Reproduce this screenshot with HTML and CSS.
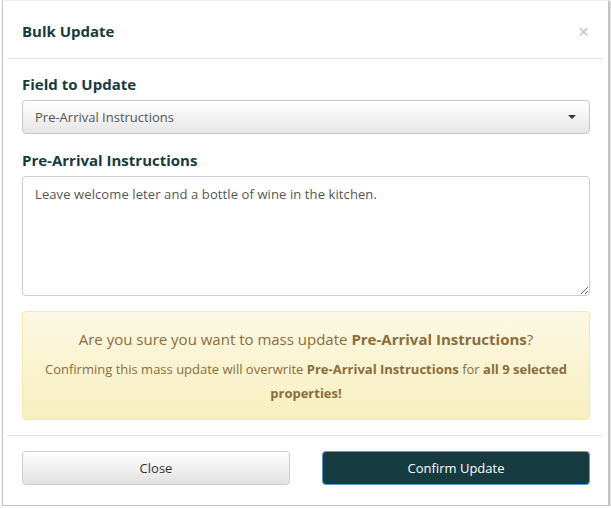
FILE: index.html
```html
<!DOCTYPE html>
<html lang="en">
  <head>
    <meta charset="UTF-8" />
    <meta name="viewport" content="width=device-width, initial-scale=1.0" />
    <title>Bulk Update</title>
    <link rel="stylesheet" href="styles.css">
  </head>

  <body>
    <div class="modal">
      <div class="modal-header">
        <h4 class="modal-title">Bulk Update</h4>
        <button class="close" aria-label="Close">&times;</button>
      </div>

      <div class="modal-body">
        <label class="field-label" for="field">Field to Update</label>
        <div class="select">
          <span>Pre-Arrival Instructions</span>
          <span class="caret"></span>
        </div>

        <label class="field-label second" for="instructions">Pre-Arrival Instructions</label>
        <textarea id="instructions" class="textarea">Leave welcome leter and a bottle of wine in the kitchen.</textarea>

        <div class="alert">
          <p class="alert-question">Are you sure you want to mass update <b>Pre-Arrival Instructions</b>?</p>
          <p class="alert-note">Confirming this mass update will overwrite <b>Pre-Arrival Instructions</b> for <b>all 9 selected properties!</b></p>
        </div>
      </div>

      <div class="modal-footer">
        <button class="btn btn-default">Close</button>
        <button class="btn btn-primary">Confirm Update</button>
      </div>
    </div>
  </body>
</html>
```

FILE: styles.css
```css
body {
  margin: 0;
  background-color: white;
  font-family: "Open Sans", "Liberation Sans", sans-serif;
  color: #555;
}

.modal {
  box-sizing: border-box;
  width: 607px;
  height: 506px;
  margin: 0 0 0 2px;
  padding: 0 18px 0 19px;
  border: 1px solid #c4c4c4;
  border-top-color: #eee;
  box-shadow: 1px 1px 2px rgba(0, 0, 0, 0.35);
  background-color: white;
}

.modal-header {
  display: flex;
  justify-content: space-between;
  align-items: center;
  margin: 0 -13px 0 -15px;
  padding: 20px 13px 16px 15px;
  border-bottom: 1px solid #e3e3e3;
}

.modal-title {
  margin: 0;
  font-size: 15px;
  line-height: 21px;
  font-weight: bold;
  color: #173b40;
}

.close {
  padding: 0;
  border: none;
  background: none;
  font-size: 19px;
  line-height: 21px;
  color: #c4c4c4;
  margin-right: 1px;
}

.modal-body {
  padding: 15px 0;
}

.field-label {
  display: block;
  margin-bottom: 5px;
  font-size: 15px;
  line-height: 21px;
  font-weight: bold;
  color: #173b40;
}

.field-label.second {
  margin-top: 16px;
}

.select {
  box-sizing: border-box;
  display: flex;
  justify-content: space-between;
  align-items: center;
  height: 34px;
  padding: 0 12px;
  border: 1px solid #c8c8c8;
  border-radius: 4px;
  background-image: linear-gradient(to bottom, #fff 0, #e6e6e6 100%);
  font-size: 13px;
}

.caret {
  width: 0;
  height: 0;
  margin-right: 1px;
  border-top: 4px solid #333;
  border-left: 4px solid transparent;
  border-right: 4px solid transparent;
}

.textarea {
  box-sizing: border-box;
  display: block;
  width: 100%;
  height: 120px;
  margin: 0;
  padding: 8px 12px;
  border: 1px solid #ccc;
  border-radius: 4px;
  font-family: inherit;
  font-size: 13px;
  line-height: 19px;
  letter-spacing: 0.1px;
  color: #555;
  resize: vertical;
}

.alert {
  box-sizing: border-box;
  height: 109px;
  margin-top: 15px;
  padding: 16px 20px 0;
  border: 1px solid #f5e9a8;
  border-radius: 4px;
  background-image: linear-gradient(to bottom, #fcf8e3 0, #f8efc0 100%);
  color: #8a6d3b;
  text-align: center;
}

.alert p {
  margin: 0;
}

.alert-question {
  font-size: 15px;
  line-height: 22px;
}

.alert-note {
  margin-top: 7px !important;
  font-size: 13px;
  line-height: 24px;
}

.modal-footer {
  display: grid;
  grid-template-columns: 1fr 1fr;
  gap: 32px;
  margin: 0 -13px 0 -15px;
  padding: 15px 13px 0 15px;
  border-top: 1px solid #e3e3e3;
}

.btn {
  height: 34px;
  border-radius: 4px;
  font-family: inherit;
  font-size: 13px;
  cursor: pointer;
}

.btn-default {
  border: 1px solid #ccc;
  background-image: linear-gradient(to bottom, #fff 0, #e2e2e2 100%);
  color: #333;
}

.btn-primary {
  border: 1px solid #5a95d6;
  background-color: #163b40;
  color: white;
}
```
